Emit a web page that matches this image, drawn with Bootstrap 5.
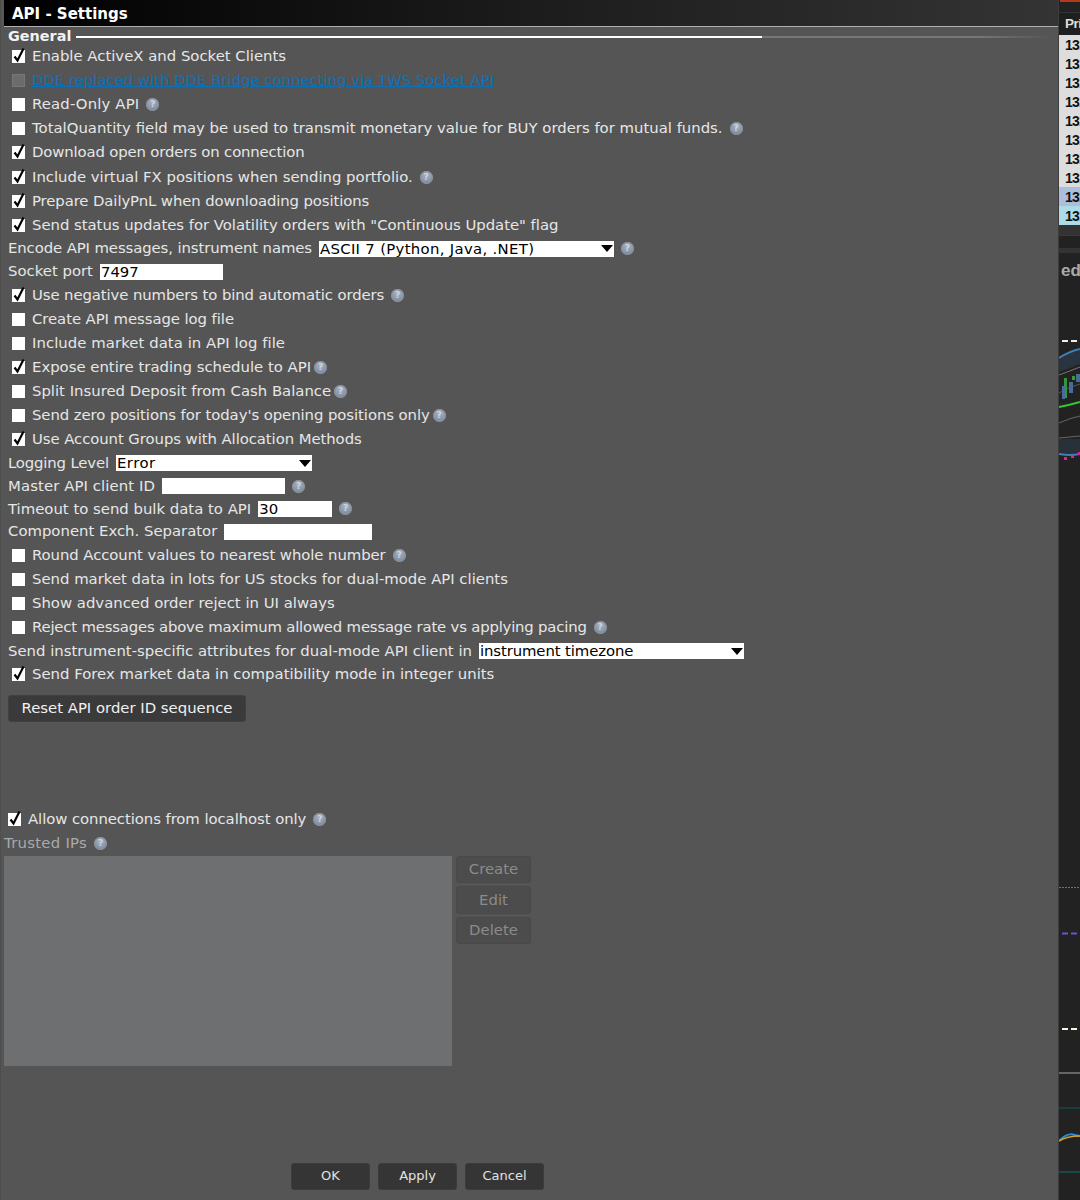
<!DOCTYPE html>
<html lang="en"><head><meta charset="utf-8"><title>API - Settings</title>
<link href="https://cdn.jsdelivr.net/npm/bootstrap@5.3.0/dist/css/bootstrap.min.css" rel="stylesheet">
<style>
html,body{height:1200px;overflow:hidden;background:#555}
body{font-family:"DejaVu Sans",sans-serif;font-size:14.87px;color:#e6e6e6;line-height:1}
.shell{width:1080px;height:1200px}
.panel{width:1058px;height:1200px;background:#555;border-left:1px dotted #484848}
.titlebar{height:27px;margin-left:3px;padding:2px 0 0 8px;background:linear-gradient(90deg,#000,#1c1c1c 50%,#343434);border-bottom:1px solid #b0b0b0;color:#fff;font-weight:700;font-size:15px}
.legend{height:16.3px;padding-left:7px;margin-top:1px;font-weight:700;font-size:14.4px;color:#f2f2f2}
.rule{height:2px;flex:1;margin:2px 8px 0 5px;background:linear-gradient(90deg,#fff 0,#fff 686px,#777 686px,#777 900px,#555 100%)}
.ckrow{height:24.15px;padding-left:11px}
.fldrow{height:22.8px;padding-left:7px}
.ckbox{position:relative;width:13px;height:13px;margin-right:7px;flex:none}
.ckbox .form-check-input{display:block;margin:0;width:13px;height:13px;border:0;border-radius:0;background:#fff;float:none;box-shadow:none;opacity:1}
.ckbox .form-check-input:disabled{background:#6c6c6c;border:1px solid #777}
.tick{position:absolute;left:0;top:-3px;width:14px;height:16px;pointer-events:none}
.hlp{width:13px;height:13px;margin-left:7px;border-radius:50%;background:radial-gradient(circle at 50% 30%,#a9b3c2,#6f8098);box-shadow:inset 0 0 0 1px #8c8f94;color:#cdd5df;font-size:9px;font-weight:700;flex:none;letter-spacing:0}
.hlp.near{margin-left:3px}
.lnk{color:#0b72b8;text-decoration:underline}
.pick,.entry{height:16px;border:0;border-radius:0;background-color:#fff;color:#000;font-family:"DejaVu Sans",sans-serif;font-size:14.87px;line-height:16px;padding:0 0 0 1px;margin-left:7px;box-shadow:none;flex:none}
.pick{background-image:url("data:image/svg+xml,%3Csvg xmlns='http://www.w3.org/2000/svg' width='12' height='7'%3E%3Cpath d='M0 0h12L6 7z'/%3E%3C/svg%3E");background-position:right 1px center;background-size:12px 7px;background-repeat:no-repeat}
.w294{width:295px;letter-spacing:.32px}.w197{width:196px;letter-spacing:.5px}.w265{width:265px;letter-spacing:-.1px}
.e122{width:123px}.e123{width:123px}.e74{width:74px}.e148{width:148px}
.trk-n19{letter-spacing:-.19px}.trk-n15{letter-spacing:-.15px}.trk-n10{letter-spacing:-.1px}.trk-n07{letter-spacing:-.07px}.trk-n03{letter-spacing:-.03px}
.trk-p06{letter-spacing:.06px}.trk-p10{letter-spacing:.1px}.trk-p15{letter-spacing:.15px}.trk-p27{letter-spacing:.27px}
.darkbtn{background:#3a3a3a;border:1px solid #404040;border-radius:3px;color:#f0f0f0;font-size:14.87px;padding:0;height:27px}
.resetbtn{width:238px;margin:8px 0 0 7px}
.allow{margin-top:86px;padding-left:7px;height:24px}
.allow .ckbox{margin-right:7px}
.trusted{height:24px;padding-left:3px;color:#a9a9a9}
.iparea{margin-left:3px;gap:4px}
.iplist{width:448px;height:210px;background:#6e6f71}
.ipbtns{gap:3px}
.offbtn{width:75px;height:27.5px;background:#4c4c4c;border:1px solid #494949;border-radius:3px;color:#8b8b8b;font-size:14.87px;padding:0}
.foot{margin-top:97px;gap:8px;padding-left:290px}
.footbtn{width:79px;height:27px;background:#353535;border:1px solid #3b3b3b;border-radius:3px;color:#e2e2e2;font-size:13px;padding:0}
.side{width:22px;height:1200px;background:#222;overflow:hidden;border-left:1px solid #3d3d3d;font-family:"Liberation Sans",sans-serif}
.redtop{height:2px;background:#b8391a;margin-left:1px}
.hdcell{height:23px;margin-top:10px;padding-left:6px;background:#1f1f1f;border-top:1px solid #333;color:#ddd;font-size:13.5px;font-weight:700;letter-spacing:-.5px;white-space:nowrap}
.pxcell{height:19px;padding-left:6px;background:#ddd;color:#111;font-size:14px;font-weight:700;letter-spacing:-.8px;white-space:nowrap}
.pxcell.bid{background:#adbedc}.pxcell.ask{background:#acdce8}
.gapbar{height:10px;background:#333}
.subbar{height:13px;background:#222;border-top:1px solid #3a3a3a}
.subbar2{height:5px;background:#333}
.edlbl{height:34px;padding-left:2px;color:#aaa;font-size:17px;font-weight:700;white-space:nowrap}
.chartsvg{display:block;width:21px;height:913px}
</style></head><body>
<svg width="0" height="0" class="d-none"><defs><symbol id="tk" viewBox="0 0 14 16"><path d="M2.5 9.5 5.5 13.5 11.5 1.5" fill="none" stroke="#000" stroke-width="2.2"/></symbol></defs></svg>
<div class="shell d-flex">
<div class="panel d-flex flex-column flex-none">
 <div class="titlebar d-flex align-items-center">API - Settings</div>
 <div class="legend d-flex align-items-center">General<span class="rule"></span></div>
 <div class="opts">
 <div class="ckrow d-flex align-items-center"><span class="ckbox"><input class="form-check-input" type="checkbox" checked><svg class="tick"><use href="#tk"/></svg></span>Enable ActiveX and Socket Clients</div>
 <div class="ckrow d-flex align-items-center"><span class="ckbox"><input class="form-check-input" type="checkbox" disabled></span><a class="lnk" href="#">DDE replaced with DDE Bridge connecting via TWS Socket API</a></div>
 <div class="ckrow trk-p15 d-flex align-items-center"><span class="ckbox"><input class="form-check-input" type="checkbox"></span>Read-Only API<span class="hlp d-flex align-items-center justify-content-center">?</span></div>
 <div class="ckrow d-flex align-items-center"><span class="ckbox"><input class="form-check-input" type="checkbox"></span>TotalQuantity field may be used to transmit monetary value for BUY orders for mutual funds.<span class="hlp d-flex align-items-center justify-content-center">?</span></div>
 <div class="ckrow trk-n15 d-flex align-items-center"><span class="ckbox"><input class="form-check-input" type="checkbox" checked><svg class="tick"><use href="#tk"/></svg></span>Download open orders on connection</div>
 <div class="ckrow d-flex align-items-center"><span class="ckbox"><input class="form-check-input" type="checkbox" checked><svg class="tick"><use href="#tk"/></svg></span>Include virtual FX positions when sending portfolio.<span class="hlp d-flex align-items-center justify-content-center">?</span></div>
 <div class="ckrow trk-n10 d-flex align-items-center"><span class="ckbox"><input class="form-check-input" type="checkbox" checked><svg class="tick"><use href="#tk"/></svg></span>Prepare DailyPnL when downloading positions</div>
 <div class="ckrow trk-n03 d-flex align-items-center"><span class="ckbox"><input class="form-check-input" type="checkbox" checked><svg class="tick"><use href="#tk"/></svg></span>Send status updates for Volatility orders with "Continuous Update" flag</div>
 <div class="fldrow trk-n10 d-flex align-items-center">Encode API messages, instrument names<select class="pick form-select w294"><option>ASCII 7 (Python, Java, .NET)</option></select><span class="hlp d-flex align-items-center justify-content-center">?</span></div>
 <div class="fldrow d-flex align-items-center">Socket port<input class="entry form-control e122" value="7497"></div>
 <div class="ckrow trk-n10 d-flex align-items-center"><span class="ckbox"><input class="form-check-input" type="checkbox" checked><svg class="tick"><use href="#tk"/></svg></span>Use negative numbers to bind automatic orders<span class="hlp d-flex align-items-center justify-content-center">?</span></div>
 <div class="ckrow trk-n07 d-flex align-items-center"><span class="ckbox"><input class="form-check-input" type="checkbox"></span>Create API message log file</div>
 <div class="ckrow trk-p06 d-flex align-items-center"><span class="ckbox"><input class="form-check-input" type="checkbox"></span>Include market data in API log file</div>
 <div class="ckrow d-flex align-items-center"><span class="ckbox"><input class="form-check-input" type="checkbox" checked><svg class="tick"><use href="#tk"/></svg></span>Expose entire trading schedule to API<span class="hlp near d-flex align-items-center justify-content-center">?</span></div>
 <div class="ckrow d-flex align-items-center"><span class="ckbox"><input class="form-check-input" type="checkbox"></span>Split Insured Deposit from Cash Balance<span class="hlp near d-flex align-items-center justify-content-center">?</span></div>
 <div class="ckrow trk-n07 d-flex align-items-center"><span class="ckbox"><input class="form-check-input" type="checkbox"></span>Send zero positions for today's opening positions only<span class="hlp near d-flex align-items-center justify-content-center">?</span></div>
 <div class="ckrow trk-n07 d-flex align-items-center"><span class="ckbox"><input class="form-check-input" type="checkbox" checked><svg class="tick"><use href="#tk"/></svg></span>Use Account Groups with Allocation Methods</div>
 <div class="fldrow trk-n15 d-flex align-items-center">Logging Level<select class="pick form-select w197"><option>Error</option></select></div>
 <div class="fldrow trk-p10 d-flex align-items-center">Master API client ID<input class="entry form-control e123" value=""><span class="hlp d-flex align-items-center justify-content-center">?</span></div>
 <div class="fldrow d-flex align-items-center">Timeout to send bulk data to API<input class="entry form-control e74" value="30"><span class="hlp d-flex align-items-center justify-content-center">?</span></div>
 <div class="fldrow d-flex align-items-center">Component Exch. Separator<input class="entry form-control e148" value=""></div>
 <div class="ckrow trk-n07 d-flex align-items-center"><span class="ckbox"><input class="form-check-input" type="checkbox"></span>Round Account values to nearest whole number<span class="hlp d-flex align-items-center justify-content-center">?</span></div>
 <div class="ckrow d-flex align-items-center"><span class="ckbox"><input class="form-check-input" type="checkbox"></span>Send market data in lots for US stocks for dual-mode API clients</div>
 <div class="ckrow d-flex align-items-center"><span class="ckbox"><input class="form-check-input" type="checkbox"></span>Show advanced order reject in UI always</div>
 <div class="ckrow trk-n19 d-flex align-items-center"><span class="ckbox"><input class="form-check-input" type="checkbox"></span>Reject messages above maximum allowed message rate vs applying pacing<span class="hlp d-flex align-items-center justify-content-center">?</span></div>
 <div class="fldrow d-flex align-items-center">Send instrument-specific attributes for dual-mode API client in<select class="pick form-select w265"><option>instrument timezone</option></select></div>
 <div class="ckrow d-flex align-items-center"><span class="ckbox"><input class="form-check-input" type="checkbox" checked><svg class="tick"><use href="#tk"/></svg></span>Send Forex market data in compatibility mode in integer units</div>
 </div>
 <button type="button" class="btn darkbtn resetbtn">Reset API order ID sequence</button>
 <div class="allow trk-n07 d-flex align-items-center"><span class="ckbox"><input class="form-check-input" type="checkbox" checked><svg class="tick"><use href="#tk"/></svg></span>Allow connections from localhost only<span class="hlp d-flex align-items-center justify-content-center">?</span></div>
 <div class="trusted trk-p27 d-flex align-items-center">Trusted IPs<span class="hlp d-flex align-items-center justify-content-center">?</span></div>
 <div class="iparea d-flex">
  <div class="iplist"></div>
  <div class="ipbtns d-flex flex-column">
   <button type="button" class="btn offbtn">Create</button>
   <button type="button" class="btn offbtn">Edit</button>
   <button type="button" class="btn offbtn">Delete</button>
  </div>
 </div>
 <div class="foot d-flex">
  <button type="button" class="btn footbtn">OK</button>
  <button type="button" class="btn footbtn">Apply</button>
  <button type="button" class="btn footbtn">Cancel</button>
 </div>
</div>
<div class="side d-flex flex-column">
 <div class="redtop"></div>
 <div class="hdcell d-flex align-items-center">Pri</div>
 <div class="pxcell d-flex align-items-center">131</div>
 <div class="pxcell d-flex align-items-center">131</div>
 <div class="pxcell d-flex align-items-center">131</div>
 <div class="pxcell d-flex align-items-center">131</div>
 <div class="pxcell d-flex align-items-center">131</div>
 <div class="pxcell d-flex align-items-center">131</div>
 <div class="pxcell d-flex align-items-center">131</div>
 <div class="pxcell d-flex align-items-center">131</div>
 <div class="pxcell bid d-flex align-items-center">131</div>
 <div class="pxcell ask d-flex align-items-center">131</div>
 <div class="gapbar"></div><div class="subbar"></div><div class="subbar2"></div>
 <div class="edlbl d-flex align-items-center">ed</div>
 <svg class="chartsvg" viewBox="1059 287 21 913" fill="none">
  <path d="M1062 341h21" stroke="#eee" stroke-width="2" stroke-dasharray="6 3"/>
  <path d="M1059 358Q1070 351 1080 349V364L1059 372Z" fill="#2a3340"/>
  <path d="M1059 358Q1070 351 1080 349" stroke="#3f7fb5" stroke-width="2"/>
  <path d="M1059 375Q1070 371 1080 367" stroke="#777"/>
  <path d="M1059 393Q1070 386 1080 384" stroke="#555"/>
  <rect x="1064" y="378" width="3" height="20" fill="#2f9a35"/>
  <rect x="1062" y="386" width="3" height="13" fill="#4a6a9a"/>
  <rect x="1069" y="382" width="4" height="11" fill="#4a6a9a"/>
  <rect x="1072" y="376" width="3" height="4" fill="#3a9a3a"/>
  <rect x="1076" y="374" width="4" height="8" fill="#4a6a9a"/>
  <path d="M1059 407Q1070 405 1080 402" stroke="#2ecc2e" stroke-width="2"/>
  <path d="M1059 423Q1070 418 1080 416" stroke="#666"/>
  <path d="M1059 438L1080 436" stroke="#666"/>
  <path d="M1059 439H1080V454L1059 454Z" fill="#283039"/>
  <path d="M1059 454Q1070 456 1080 454" stroke="#3f7fb5" stroke-width="2"/>
  <rect x="1064" y="457" width="3" height="3" fill="#e0209a"/>
  <rect x="1071" y="455" width="3" height="3" fill="#e0209a"/>
  <rect x="1078" y="452" width="2" height="3" fill="#e0209a"/>
  <path d="M1059 887.5h21" stroke="#2f8f88" stroke-dasharray="2 1"/>
  <path d="M1062 933.5h21" stroke="#6a55d0" stroke-width="2" stroke-dasharray="6 3"/>
  <path d="M1062 1029h21" stroke="#f5f5e0" stroke-width="2" stroke-dasharray="6 3"/>
  <path d="M1059 1073h21" stroke="#666" stroke-width="2"/>
  <path d="M1059 1108h21" stroke="#0f5a5a"/>
  <path d="M1060 1140Q1068 1132 1075 1135L1080 1136" stroke="#2a86d8" stroke-width="2"/>
  <path d="M1059 1141Q1067 1136 1080 1136" stroke="#d8a020" stroke-width="1.5"/>
  <path d="M1059 1172h21" stroke="#0f7070"/>
 </svg>
</div>
</div>
</body></html>
